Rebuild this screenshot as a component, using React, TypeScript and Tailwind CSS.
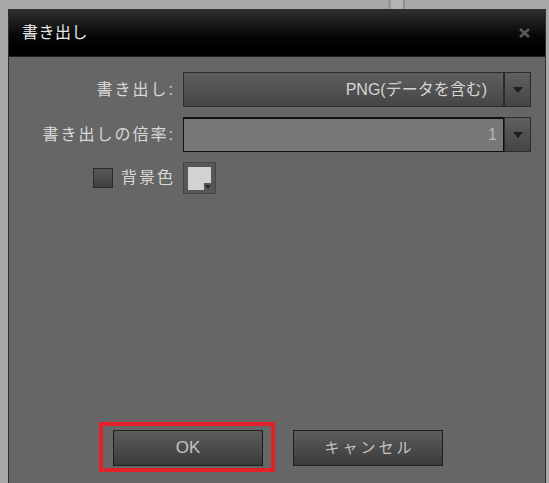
const font = "font-['Liberation_Sans','Noto_Sans_CJK_JP',sans-serif]";

const Arrow = () => (
  <svg width="10" height="6" viewBox="0 0 10 6">
    <path d="M0 0 L10 0 L5 6 Z" fill="#1e1e1e" />
  </svg>
);

const DropButton = () => (
  <div className="flex w-[27px] items-center justify-center border border-[#2c2c2c] bg-gradient-to-b from-[#606060] to-[#444444]">
    <Arrow />
  </div>
);

const Label = ({ children }: { children: React.ReactNode }) => (
  <div className="flex w-[166px] items-center justify-end text-[16px] tracking-[2px] text-[#d8d8d8]">{children}</div>
);

const App = () => {
  return (
    <div className={`flex h-[483px] w-[549px] flex-col overflow-hidden bg-[#a9a9a9] ${font}`}>
      <div className="flex h-[9px] shrink-0">
        <div className="w-[388px]" />
        <div className="w-[3px] bg-[#979797]" />
        <div className="w-[12px] bg-[#b4b4b4]" />
        <div className="w-[2px] bg-[#8e8e8e]" />
      </div>
      <div className="ml-[8px] mr-[3px] flex flex-1 flex-col border-x border-t border-[#2e2e2e] bg-[#666666]">
        <div className="flex h-[47px] shrink-0 items-center justify-between border-b border-[#222] bg-gradient-to-b from-[#2f2f2f] via-[#0c0c0c] to-[#000000] pl-[13px] pr-[15px]">
          <span className="text-[16px] tracking-[0.5px] text-[#e6e6e6]">書き出し</span>
          <svg width="11" height="10" viewBox="0 0 11 10">
            <path d="M1 1 L10 9 M10 1 L1 9" stroke="#5a5a5a" strokeWidth="2.6" />
          </svg>
        </div>

        <div className="flex flex-col gap-[10px] pt-[15px]">
          <div className="flex h-[35px] gap-[8px]">
            <Label>書き出し:</Label>
            <div className="flex w-[348px]">
              <div className="flex flex-1 items-center justify-end border border-[#2c2c2c] bg-gradient-to-b from-[#5e5e5e] to-[#464646] pr-[16px] text-[16px] text-[#d4d4d4]">
                PNG(データを含む)
              </div>
              <DropButton />
            </div>
          </div>

          <div className="flex h-[35px] gap-[8px]">
            <Label>書き出しの倍率:</Label>
            <div className="flex w-[348px]">
              <div className="flex flex-1 items-center justify-end border border-t-2 border-[#111] bg-[#777777] pr-[6px] text-[16px] text-[#b8b8b8]">
                1
              </div>
              <DropButton />
            </div>
          </div>

          <div className="flex h-[32px] gap-[8px]">
            <div className="flex w-[166px] items-center justify-end gap-[8px] text-[16px] tracking-[2px] text-[#d8d8d8]">
              <div className="h-[20px] w-[20px] border border-[#2a2a2a] bg-gradient-to-b from-[#5a5a5a] to-[#3e3e3e]" />
              <span>背景色</span>
            </div>
            <div className="flex h-[32px] w-[33px] items-center justify-center border border-[#454545] bg-[#575757]">
              <svg width="23" height="23" viewBox="0 0 23 23">
                <path d="M0 0 H23 V16 H16 V23 H0 Z" fill="#d2d2d2" />
                <path d="M17 18 H23 L20 22 Z" fill="#2a2a2a" />
              </svg>
            </div>
          </div>
        </div>

        <div className="mt-auto mb-[11px] flex items-center gap-[18px] pl-[90px]">
          <div className="border-4 border-[#e3212b] pb-[2px] pl-[10px] pr-[8px] pt-[4px]">
            <button className="flex h-[36px] w-[150px] items-center justify-center border border-[#1e1e1e] bg-gradient-to-b from-[#5c5c5c] to-[#3b3b3b] text-[17px] text-[#c4c4c4]">
              OK
            </button>
          </div>
          <button className="mt-[2px] flex h-[36px] w-[150px] items-center justify-center border border-[#1e1e1e] bg-gradient-to-b from-[#5c5c5c] to-[#3b3b3b] pl-[3px] text-[15px] tracking-[3px] text-[#c4c4c4]">
            キャンセル
          </button>
        </div>
      </div>
    </div>
  );
};

export default App;
